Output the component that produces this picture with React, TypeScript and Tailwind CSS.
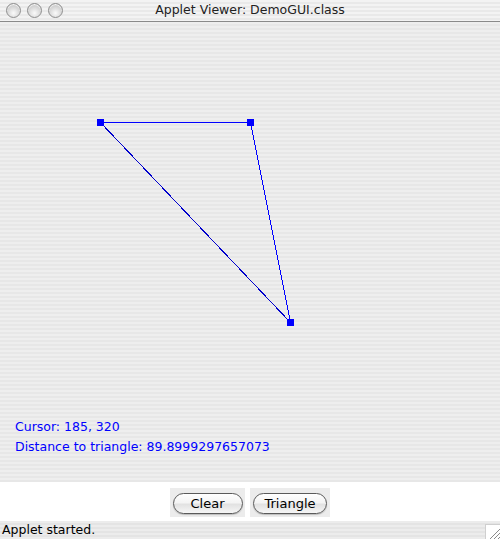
import React from "react";

const font = { fontFamily: '"DejaVu Sans", "Liberation Sans", sans-serif' };

const TrafficLight = () => (
  <span className="w-[15px] h-[15px] rounded-full border border-[#8e8e8e] bg-[radial-gradient(circle_at_50%_70%,#fafafa_0%,#d6d6d6_55%,#b4b4b4_100%)] shadow-[inset_0_1px_1px_rgba(255,255,255,0.9)]" />
);

const PillButton = ({ label, w, pill }: { label: string; w: string; pill: string }) => (
  <div className={`h-[29px] bg-[#ececec] flex items-center justify-center ${w}`}>
    <button
      className={`h-[21px] mt-[2px] rounded-full border border-[#5a5a5a] bg-[linear-gradient(to_bottom,#ffffff_0%,#f4f4f4_45%,#e2e2e2_55%,#f6f6f6_100%)] text-[13px] text-black leading-none shadow-[0_1px_1px_rgba(0,0,0,0.2)] ${pill}`}
      style={font}
    >
      {label}
    </button>
  </div>
);

export default function App() {
  return (
    <div className="w-[500px] h-[539px] flex flex-col bg-white overflow-hidden" style={font}>
      {/* title bar */}
      <div className="relative h-[22px] shrink-0 flex items-center border-b border-[#8a8a8a] bg-[repeating-linear-gradient(to_bottom,#f3f3f3_0px,#f3f3f3_2px,#e9e9e9_2px,#e9e9e9_4px)]">
        <div className="flex items-center gap-[6px] pl-[6px]">
          <TrafficLight />
          <TrafficLight />
          <TrafficLight />
        </div>
        <div className="absolute inset-0 flex items-center justify-center text-[12.5px] text-[#222]">
          Applet Viewer: DemoGUI.class
        </div>
      </div>

      {/* canvas */}
      <div className="relative flex-1 flex flex-col justify-end pb-[25px] pl-[15px] bg-[repeating-linear-gradient(to_bottom,#eeeeee_0px,#eeeeee_2px,#e7e7e7_2px,#e7e7e7_4px)]">
        <svg
          className="absolute left-0 top-0"
          width="500"
          height="460"
          viewBox="0 22 500 460"
          shapeRendering="crispEdges"
        >
          <line x1="100.5" y1="122.5" x2="250.5" y2="122.5" stroke="#0000ff" strokeWidth="1" />
          <line x1="250.5" y1="122.5" x2="290.5" y2="322.5" stroke="#0000ff" strokeWidth="1" />
          <line x1="100.5" y1="122.5" x2="290.5" y2="322.5" stroke="#0000cc" strokeWidth="1" />
          <rect x="97" y="119" width="7" height="7" fill="#0000ff" />
          <rect x="247" y="119" width="7" height="7" fill="#0000ff" />
          <rect x="287" y="319" width="7" height="7" fill="#0000ff" />
        </svg>
        <div className="relative text-[12.5px] leading-[20px] text-[#0000ff]">
          <div>Cursor: 185, 320</div>
          <div>Distance to triangle: 89.8999297657073</div>
        </div>
      </div>

      {/* buttons */}
      <div className="h-[39px] shrink-0 bg-white flex items-start justify-center gap-[5px] pt-[6px]">
        <PillButton label="Clear" w="w-[75px]" pill="w-[70px]" />
        <PillButton label="Triangle" w="w-[80px]" pill="w-[74px]" />
      </div>

      {/* status bar */}
      <div className="relative h-[18px] shrink-0 flex items-center pl-[2px] text-[12.5px] text-black bg-[repeating-linear-gradient(to_bottom,#ececec_0px,#ececec_2px,#e4e4e4_2px,#e4e4e4_4px)]">
        Applet started.
        <div className="absolute right-0 bottom-0 w-[15px] h-[15px] bg-white border-l border-t border-[#cfcfcf]">
          <svg width="15" height="15" viewBox="0 0 15 15">
            <path d="M4 14 L14 4 M8 14 L14 8 M12 14 L14 12" stroke="#8a8a8a" strokeWidth="1" />
          </svg>
        </div>
      </div>
    </div>
  );
}
